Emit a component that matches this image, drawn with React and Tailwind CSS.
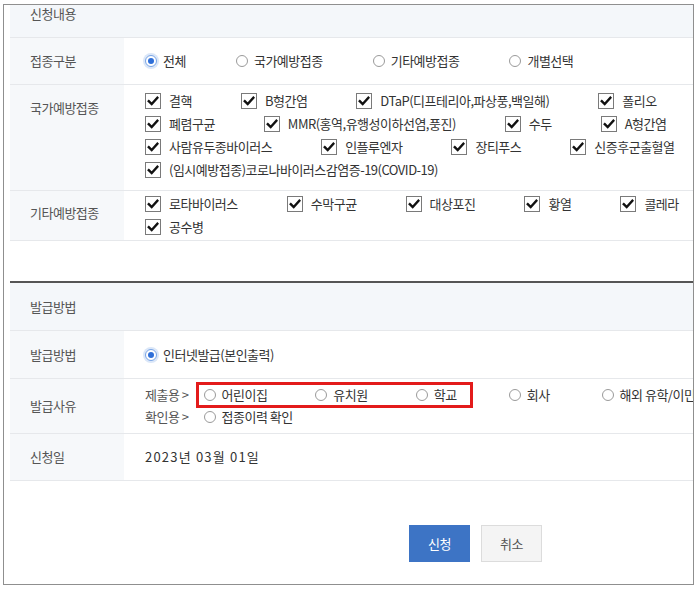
import React from 'react';

const Radio = ({ label, checked, className = '' }) => (
    <div className={`flex items-center gap-[6px] ${className}`}>
        <span
            className={
                checked
                    ? 'w-[12px] h-[12px] rounded-full border border-[#7aa5e6] bg-white flex items-center justify-center shadow-[0_0_0_2px_#dbe7f8]'
                    : 'w-[12px] h-[12px] rounded-full border border-[#9a9a9a] bg-white'
            }
        >
            {checked && <span className="w-[6px] h-[6px] rounded-full bg-[#2f6fd8]" />}
        </span>
        <span className="whitespace-nowrap">{label}</span>
    </div>
);

const Check = ({ label }) => (
    <div className="flex items-center gap-[8px] h-[23px]">
        <span className="w-[16px] h-[16px] border border-[#7a7a7a] bg-white flex items-center justify-center">
            <svg width="12" height="12" viewBox="0 0 12 12">
                <path d="M1.8 6.2 L4.7 9 L10.4 2.8" fill="none" stroke="#111" strokeWidth="2.4" strokeLinecap="square" />
            </svg>
        </span>
        <span className="whitespace-nowrap">{label}</span>
    </div>
);

const Row = ({ label, labelClass = 'items-center', valueClass = 'items-center', h, children }) => (
    <div className={`flex border-b border-[#e6e8eb] ${h}`}>
        <div className={`w-[114px] shrink-0 bg-[#f6f8fa] pl-[20px] flex text-[#555] ${labelClass}`}>{label}</div>
        <div className={`flex-1 pl-[21px] flex ${valueClass}`}>{children}</div>
    </div>
);

const nationalItems = [
    '결핵', 'B형간염', 'DTaP(디프테리아,파상풍,백일해)', '폴리오',
    '폐렴구균', 'MMR(홍역,유행성이하선염,풍진)', '수두', 'A형간염',
    '사람유두종바이러스', '인플루엔자', '장티푸스', '신증후군출혈열',
    '(임시예방접종)코로나바이러스감염증-19(COVID-19)',
];

const otherItems = ['로타바이러스', '수막구균', '대상포진', '황열', '콜레라', '공수병'];

export default function App() {
    return (
        <div className="w-[700px] h-[589px] bg-white pt-[4px] pl-[3px] font-['Noto_Sans_CJK_KR','Noto_Sans',sans-serif] text-[13px] tracking-[-0.5px] text-[#333]">
            <div className="w-[691px] h-[581px] border border-[#8f8f8f] overflow-hidden pl-[6px]">
                <div className="w-[750px]">
                    {/* 신청내용 */}
                    <div className="h-[33px] bg-[#f4f7fa] border-b border-[#e6e8eb] pl-[20px] leading-[18px] text-[#555]">
                        신청내용
                    </div>

                    <Row label="접종구분" h="h-[47px]">
                        <div className="flex items-center gap-[50px]">
                            <Radio label="전체" checked />
                            <Radio label="국가예방접종" />
                            <Radio label="기타예방접종" />
                            <Radio label="개별선택" />
                        </div>
                    </Row>

                    <Row label="국가예방접종" h="h-[106px]" labelClass="pt-[13px]" valueClass="items-start pt-[4px]">
                        <div className="flex flex-wrap gap-x-[49px] w-[560px]">
                            {nationalItems.map((t) => (
                                <Check key={t} label={t} />
                            ))}
                        </div>
                    </Row>

                    <Row label="기타예방접종" h="h-[50px]" labelClass="pt-[12px]" valueClass="items-start pt-[1px]">
                        <div className="flex flex-wrap gap-x-[49px] w-[560px]">
                            {otherItems.map((t) => (
                                <Check key={t} label={t} />
                            ))}
                        </div>
                    </Row>

                    <div className="h-[40px]" />
                    <div className="h-[2px] bg-[#555]" />

                    {/* 발급방법 */}
                    <div className="h-[48px] bg-[#f4f7fa] border-b border-[#e6e8eb] pl-[20px] flex items-center text-[#555]">
                        발급방법
                    </div>

                    <Row label="발급방법" h="h-[48px]">
                        <Radio label="인터넷발급(본인출력)" checked />
                    </Row>

                    <Row label="발급사유" h="h-[55px]" valueClass="flex-col justify-center">
                        <div className="flex items-center h-[22px]">
                            <span className="text-[#555] whitespace-nowrap">제출용 &gt;</span>
                            <div className="ml-[7px] h-[26px] border-[3px] border-[#e31b1b] flex items-center pl-[5px] pr-[13px] gap-[48px]">
                                <Radio label="어린이집" />
                                <Radio label="유치원" />
                                <Radio label="학교" />
                            </div>
                            <Radio label="회사" className="ml-[36px]" />
                            <Radio label="해외 유학/이민" className="ml-[52px]" />
                        </div>
                        <div className="flex items-center h-[22px]">
                            <span className="text-[#555] whitespace-nowrap">확인용 &gt;</span>
                            <Radio label="접종이력 확인" className="ml-[15px]" />
                        </div>
                    </Row>

                    <Row label="신청일" h="h-[47px]">
                        <span className="tracking-[1.2px]">2023년 03월 01일</span>
                    </Row>

                    <div className="flex pl-[399px] pt-[44px] gap-[11px]">
                        <button className="w-[61px] h-[37px] bg-[#3d74c5] text-white text-[13px]">신청</button>
                        <button className="w-[61px] h-[37px] bg-[#f4f4f4] border border-[#dcdcdc] text-[#555] text-[13px]">취소</button>
                    </div>
                </div>
            </div>
        </div>
    );
}
